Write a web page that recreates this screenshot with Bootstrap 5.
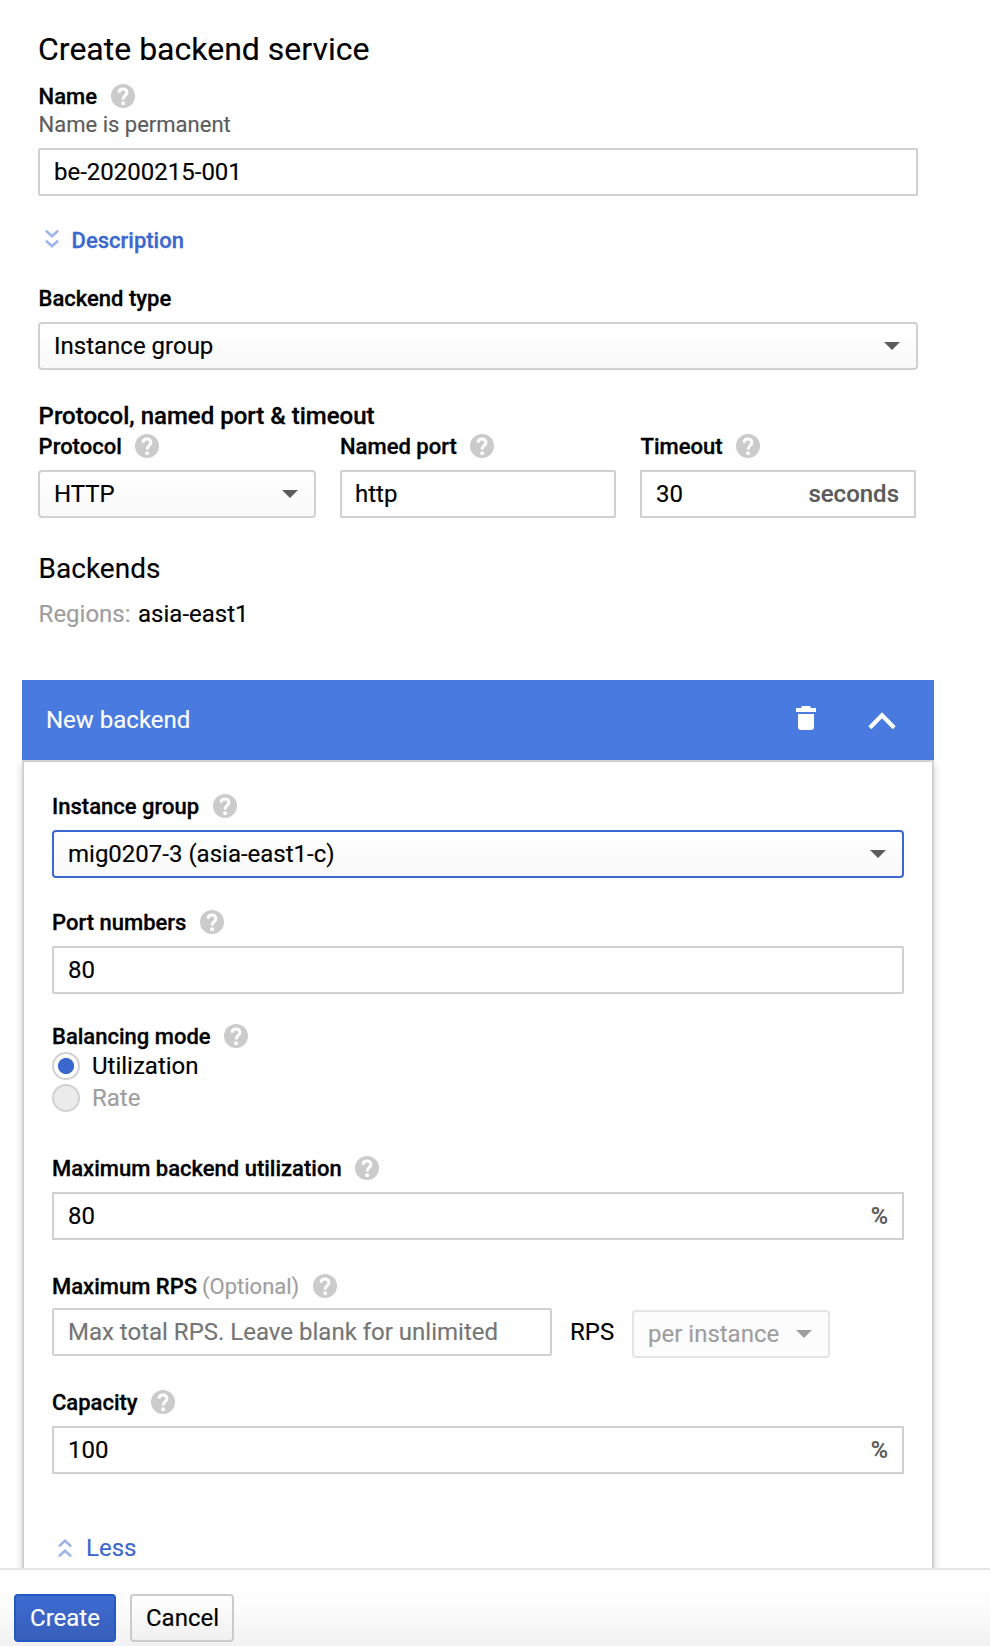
<!DOCTYPE html>
<html lang="en">
<head>
<meta charset="utf-8">
<title>Create backend service</title>
<meta name="viewport" content="width=device-width, initial-scale=1">
<link href="https://cdn.jsdelivr.net/npm/bootstrap@5.3.0/dist/css/bootstrap.min.css" rel="stylesheet">
<style>
  :root { --line: #d1d1d1; --accent: #3b68cf; --muted-ink: #5b5b5b; --faint: #9e9e9e; }
  body { font-family: Roboto, "Liberation Sans", sans-serif; font-size: 24px; line-height: 28px; color: #000; background: #fff; -webkit-text-stroke: .15px; }
  .pane { min-height: 0; padding-top: 30px; }
  .form-area { width: 880px; margin-left: 38px; }
  .title { font-size: 32px; line-height: 38px; font-weight: 400; margin: 0 0 16px; }
  .field-label { display: flex; align-items: center; height: 24px; padding-top: 2px; font-size: 22px; line-height: 24px; font-weight: 500; margin: 0 0 12px; white-space: nowrap; -webkit-text-stroke: .3px; }
  .field-label svg { width: 24px; height: 24px; margin: -2px 0 0 13.5px; flex: none; }
  .form-area > .field-label, .form-area > .hint, .form-area > .section-head, .sub-title, .regions, .ports > :first-child > .field-label, .ports > :last-child > .field-label { padding-left: .6px; }
  .hint { font-size: 22px; line-height: 24px; color: var(--muted-ink); margin: 5px 0 11px; }
  .section-head { font-weight: 500; margin: 32px 0 4px; -webkit-text-stroke: .3px; }
  .sub-title { font-size: 28px; line-height: 32px; font-weight: 400; margin: 35px 0 15px; }
  .faint { color: var(--faint); }
  .region { margin-left: 7.5px; }

  .ctl.form-control, .ctl.form-select, .ctl-group {
    height: 48px; border: 2px solid var(--line); border-radius: 2px; padding: 0 14px; font-size: 24px; line-height: 28px; color: #000; background-color: #fff; }
  .ctl.form-control::placeholder { color: #757575; }
  #port { padding-left: 13px; }
  .ctl.form-select { border-radius: 4px; background: linear-gradient(#fff, #f9f9f9); display: flex; align-items: center; justify-content: space-between; padding-right: 16px; }
  .ctl.form-select.is-active { border-color: var(--accent); }
  .ctl.form-select.is-off { color: var(--faint); border-color: #e4e4e4; background: #fcfcfc; width: 198px; margin-top: 2px; }
  .caret { width: 0; height: 0; border: 8px solid transparent; border-top-color: #5b5b5b; border-bottom: 0; }
  .is-off .caret { border-top-color: var(--faint); }
  .ctl-group { border-radius: 0; display: flex; align-items: center; }
  .ctl-group input { border: 0; outline: 0; padding: 0; flex: 1; min-width: 0; width: 0; height: 28px; color: #000; background: none; }
  .ctl-group .unit { color: var(--muted-ink); font-weight: 500; margin-right: 1px; }
  .ctl-group .pct { font-size: 23.5px; margin-right: 0; }
  .toggle-link { display: flex; align-items: center; color: var(--accent); text-decoration: none; }
  .toggle-link svg { width: 14px; height: 20px; }
  .describe { margin: 32px 0 34px; }
  .describe svg { margin: -5px 13px 0 6px; }
  .ports { display: grid; grid-template-columns: 278px 276px 276px; column-gap: 24px; }

  .backend { width: 912px; margin: 52px 0 0 22px; border-radius: 0; border: 0; }
  .backend .card-header { position: relative; height: 80px; padding: 0 38px 0 24px; border: 0; border-radius: 0; background: #487adf; color: #fff; }
  .backend .card-body { border: 2px solid var(--line); padding: 32px 28px 40px; height: 860px; box-shadow: 0 4px 8px rgba(0,0,0,.18); }
  .trash { margin: -4px 52px 0 0; }
  .fold { margin-top: 2px; }
  .choice { display: flex; align-items: center; height: 28px; margin-bottom: 4px; }
  .choice .form-check-input { width: 28px; height: 28px; margin: 0 12px 0 0; float: none; border: 2px solid var(--line); background-color: #fff; opacity: 1; }
  .choice .form-check-input:checked { background-image: radial-gradient(circle, var(--accent) 0 7.7px, transparent 8.4px); }
  .choice .form-check-input:disabled { background-color: #ebebeb; }
  .gap-30 { margin-top: 30px; } .gap-32 { margin-top: 32px; } .gap-34 { margin: 34px 0 10px; } .gap-44 { margin-top: 44px; }
  .opt { margin-left: 5px; -webkit-text-stroke: .15px; }
  .ctl.rps-box { width: 500px; }
  .rps-unit { width: 80px; padding: 10px 0 0 18px; }
  .less { margin-top: 60px; padding-left: 6px; }
  .less svg { margin-right: 14px; }

  .actions { height: 78px; flex: none; border-top: 2px solid #e6e6e6; background: linear-gradient(#fff 0, #fdfdfd 45%, #f1f1f1 100%); padding: 24px 14px 0; gap: 14px; }
  .actions .btn { height: 48px; padding: 0 14px; border-width: 2px; border-radius: 4px; font-size: 24px; line-height: 28px; }
  .actions .btn-create { width: 102px; color: #fff; background: linear-gradient(#3d6bd0, #385fbb); border-color: #2458c2; }
  .actions .btn-cancel { width: 104px; color: #000; background: linear-gradient(#fff, #f0f0f0); border-color: #cbcbcb; }
</style>
</head>
<body class="vh-100 d-flex flex-column overflow-hidden">
<svg class="d-none">
  <symbol id="help" viewBox="0 0 24 24">
    <circle cx="12" cy="12" r="12" fill="#cbcbcb"/>
    <path d="M8.1 8.8C8.1 6.3 9.7 4.9 12 4.9s3.9 1.5 3.9 3.6c0 2.9-3.8 3.2-3.8 7" fill="none" stroke="#fff" stroke-width="3"/>
    <circle cx="12.1" cy="19.3" r="2" fill="#fff"/>
  </symbol>
  <symbol id="twin" viewBox="0 0 14 20">
    <path d="M.9 1.6 7 7.3l6.1-5.7M.9 11.6 7 17.3l6.1-5.7" fill="none" stroke="#9db4e8" stroke-width="2.6"/>
  </symbol>
</svg>

<main class="pane flex-grow-1 overflow-hidden">
  <div class="form-area">
    <h1 class="title">Create backend service</h1>
    <label class="field-label mb-1" for="name">Name <svg><use href="#help"/></svg></label>
    <div class="hint">Name is permanent</div>
    <input id="name" class="ctl form-control" value="be-20200215-001">

    <a href="#" class="toggle-link field-label describe"><svg><use href="#twin"/></svg>Description</a>

    <div class="field-label">Backend type</div>
    <div class="ctl form-select">Instance group<span class="caret"></span></div>

    <div class="section-head">Protocol, named port &amp; timeout</div>
    <div class="ports">
      <div>
        <div class="field-label">Protocol <svg><use href="#help"/></svg></div>
        <div class="ctl form-select">HTTP<span class="caret"></span></div>
      </div>
      <div>
        <label class="field-label" for="port">Named port <svg><use href="#help"/></svg></label>
        <input id="port" class="ctl form-control" value="http">
      </div>
      <div>
        <label class="field-label" for="timeout">Timeout <svg><use href="#help"/></svg></label>
        <div class="ctl-group"><input id="timeout" value="30"><span class="unit">seconds</span></div>
      </div>
    </div>

    <h2 class="sub-title">Backends</h2>
    <div class="regions"><span class="faint">Regions:</span><span class="region">asia-east1</span></div>
  </div>

  <section class="card backend">
    <div class="card-header d-flex align-items-center">
      <span class="me-auto">New backend</span>
      <svg class="trash" width="20" height="24" viewBox="0 0 20 24" fill="#fff"><path d="M0 2h5L6 0h8l1 2h5v4H0zM2 8h16v13q0 3-3 3H5q-3 0-3-3z"/></svg>
      <svg class="fold" width="28" height="18" viewBox="0 0 28 18"><path d="M1.8 15.7 14 3.2l12.2 12.5" fill="none" stroke="#fff" stroke-width="4.2"/></svg>
    </div>
    <div class="card-body">
      <div class="field-label">Instance group <svg><use href="#help"/></svg></div>
      <div class="ctl form-select is-active">mig0207-3 (asia-east1-c)<span class="caret"></span></div>

      <label class="field-label gap-32" for="numbers">Port numbers <svg><use href="#help"/></svg></label>
      <input id="numbers" class="ctl form-control" value="80">

      <div class="field-label gap-30 mb-1">Balancing mode <svg><use href="#help"/></svg></div>
      <label class="choice"><input class="form-check-input" type="radio" name="mode" checked>Utilization</label>
      <label class="choice faint"><input class="form-check-input" type="radio" name="mode" disabled>Rate</label>

      <label class="field-label gap-44" for="util">Maximum backend utilization <svg><use href="#help"/></svg></label>
      <div class="ctl-group"><input id="util" value="80"><span class="unit pct">%</span></div>

      <label class="field-label gap-34" for="rps">Maximum RPS<span class="faint fw-normal opt">(Optional)</span> <svg><use href="#help"/></svg></label>
      <div class="d-flex align-items-start">
        <input id="rps" class="ctl form-control rps-box" placeholder="Max total RPS. Leave blank for unlimited">
        <span class="rps-unit">RPS</span>
        <div class="ctl form-select is-off">per instance<span class="caret"></span></div>
      </div>

      <label class="field-label gap-32" for="cap">Capacity <svg><use href="#help"/></svg></label>
      <div class="ctl-group"><input id="cap" value="100"><span class="unit pct">%</span></div>

      <a href="#" class="toggle-link less"><svg><use href="#twin" transform="rotate(180 7 10)"/></svg>Less</a>
    </div>
  </section>
</main>

<footer class="actions d-flex">
  <button class="btn btn-create">Create</button>
  <button class="btn btn-cancel">Cancel</button>
</footer>
<script src="https://cdn.jsdelivr.net/npm/bootstrap@5.3.0/dist/js/bootstrap.bundle.min.js"></script>
</body>
</html>
